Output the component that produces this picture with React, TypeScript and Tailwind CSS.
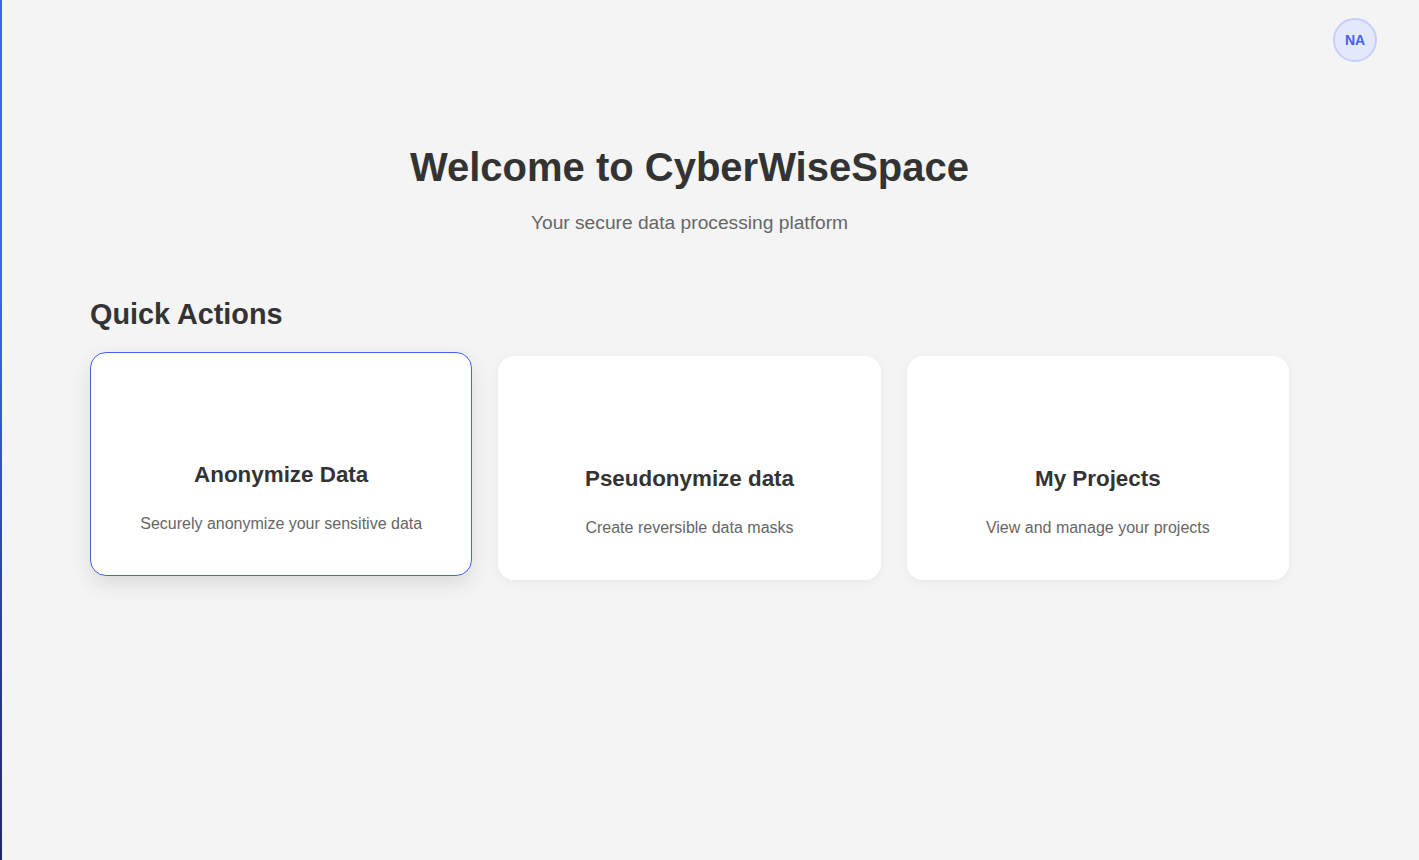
import React from "react";

const actions = [
  { title: "Anonymize Data", desc: "Securely anonymize your sensitive data", active: true },
  { title: "Pseudonymize data", desc: "Create reversible data masks", active: false },
  { title: "My Projects", desc: "View and manage your projects", active: false },
];

export default function App() {
  return (
    <div className="flex min-h-screen bg-[#f4f4f4] font-['Liberation_Sans',Arial,sans-serif] text-[#333]">
      {/* collapsed sidebar strip */}
      <aside className="w-[2px] shrink-0 bg-gradient-to-b from-[#4361ee] via-[#4361ee] via-35% to-[#1f2766]" />

      <main className="flex-1">
        <header className="flex justify-end pr-[42px] pt-[18px]">
          <div className="flex h-11 w-11 items-center justify-center rounded-full border-2 border-[#c5cff8] bg-[#e4e8fb] text-sm font-bold text-[#4361ee]">
            NA
          </div>
        </header>

        <div className="ml-[88px] w-[1199px]">
          <div className="mt-[82px] text-center">
            <h1 className="text-[40px] font-bold leading-[46px]">Welcome to CyberWiseSpace</h1>
            <p className="mt-[22px] text-[1.2rem] leading-[22px] text-[#666]">
              Your secure data processing platform
            </p>
          </div>

          <h2 className="mt-[64px] mb-[25px] text-[1.8rem] font-bold leading-[33px]">Quick Actions</h2>

          <div className="grid grid-cols-3 gap-[26px]">
            {actions.map((a) => (
              <div
                key={a.title}
                className={
                  a.active
                    ? "-translate-y-[4px] rounded-2xl border border-[#4361ee] bg-white px-8 pb-[39px] pt-8 text-center shadow-[0_8px_20px_rgba(0,0,0,0.1)]"
                    : "rounded-2xl border border-transparent bg-white px-8 pb-[39px] pt-8 text-center shadow-[0_2px_10px_rgba(0,0,0,0.05)]"
                }
              >
                <div className="h-[73px]" />
                <h3 className="text-[1.4rem] font-bold leading-[34px]">{a.title}</h3>
                <p className="mt-5 text-base leading-6 text-[#666]">{a.desc}</p>
              </div>
            ))}
          </div>
        </div>
      </main>
    </div>
  );
}
